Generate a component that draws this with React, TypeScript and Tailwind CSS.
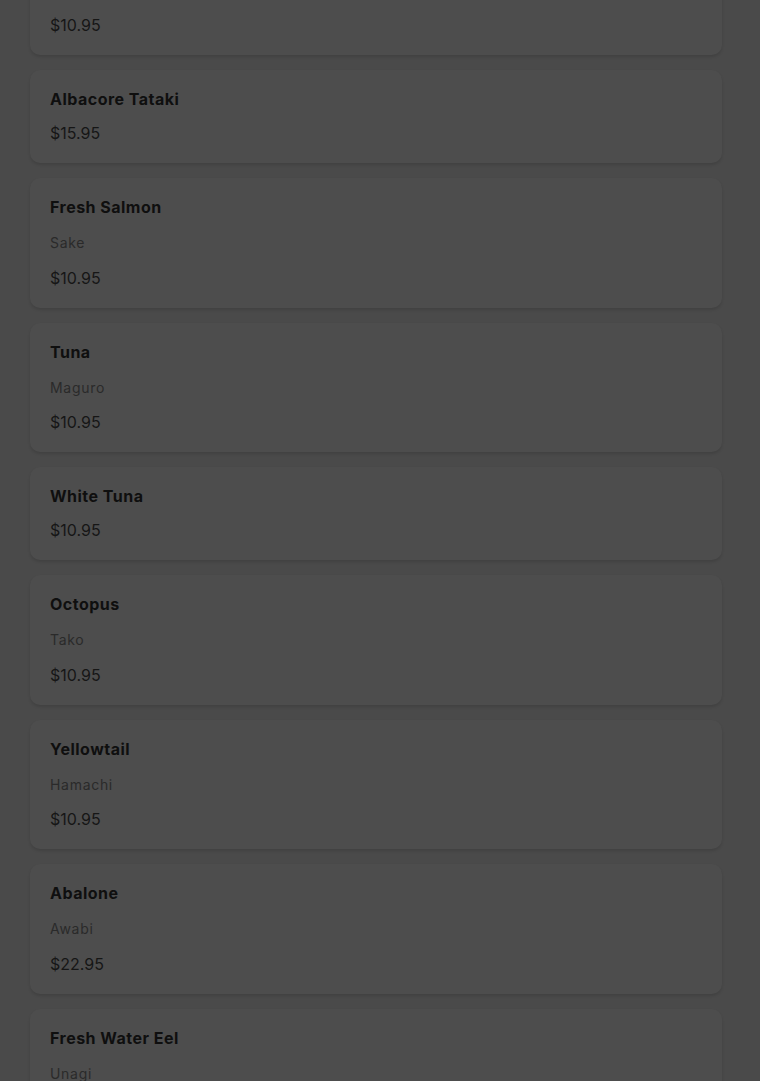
const items = [
  { name: "Salmon Belly", sub: "Sake Toro", price: "$10.95" },
  { name: "Albacore Tataki", price: "$15.95" },
  { name: "Fresh Salmon", sub: "Sake", price: "$10.95" },
  { name: "Tuna", sub: "Maguro", price: "$10.95" },
  { name: "White Tuna", price: "$10.95" },
  { name: "Octopus", sub: "Tako", price: "$10.95" },
  { name: "Yellowtail", sub: "Hamachi", price: "$10.95" },
  { name: "Abalone", sub: "Awabi", price: "$22.95" },
  { name: "Fresh Water Eel", sub: "Unagi", price: "$12.95" },
];

export default function App() {
  return (
    <div
      className="h-[1081px] overflow-hidden bg-[#4a4a4a]"
      style={{ fontFamily: "Inter, 'Open Sans', sans-serif" }}
    >
      <div className="ml-[30px] mt-[-74.5px] flex w-[692px] flex-col gap-[15px]">
        {items.map((item) => (
          <div
            key={item.name}
            className="flex flex-col gap-[15px] rounded-[10px] bg-[#4d4d4d] p-5 shadow-[0_2px_3px_rgba(0,0,0,0.12)]"
          >
            <p className="text-base leading-[19px] font-bold tracking-[0.03em] text-[#0f0f0f]">
              {item.name}
            </p>
            {item.sub && (
              <p className="text-sm leading-[21.5px] tracking-[0.05em] text-[#2a2a2a]">
                {item.sub}
              </p>
            )}
            <p className="text-base leading-[19px] text-[#161616]">{item.price}</p>
          </div>
        ))}
      </div>
    </div>
  );
}
